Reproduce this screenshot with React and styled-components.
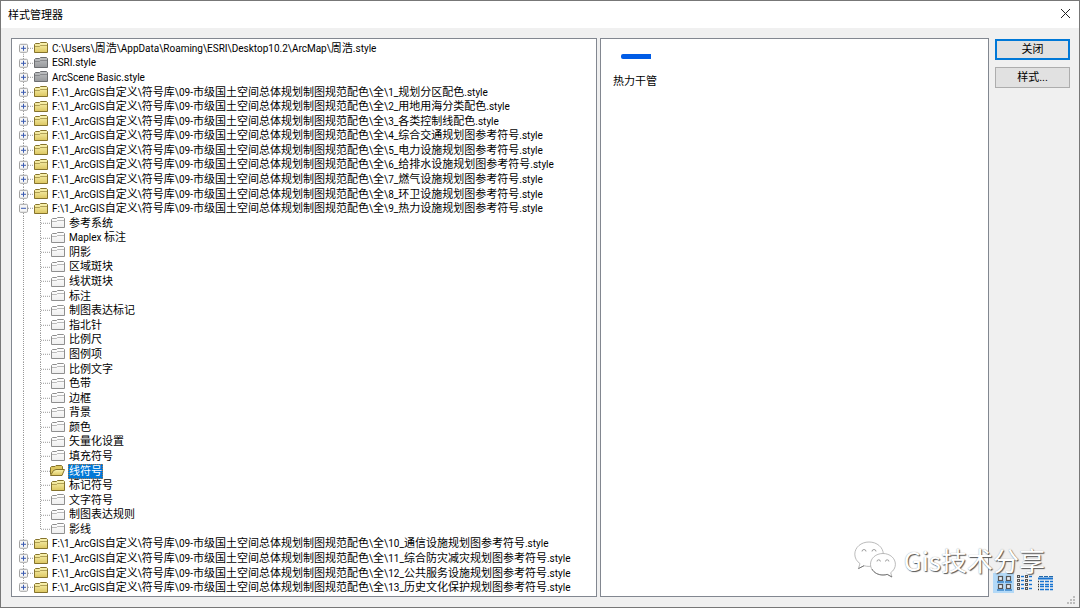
import React from "react";
import styled, { createGlobalStyle } from "styled-components";

const GlobalStyle = createGlobalStyle`
    * {
        box-sizing: border-box;
    }

    body {
        margin: 0;
        background: #f0f0f0;
        color: #000;
        font-family: Roboto, "Noto Sans CJK SC", sans-serif;
        font-size: 11px;
    }
`;

const Window = styled.div`
    position: relative;
    height: 100vh;
    min-height: 500px;
    display: flex;
    flex-direction: column;
    border: 1px solid #777;
    background: #f0f0f0;
`;

const TitleBar = styled.header`
    height: 27px;
    flex: none;
    display: flex;
    align-items: center;
    justify-content: space-between;
    padding: 0 8px 2px 7px;
    background: #fff;

    h1 {
        margin: 0;
        font-size: 11px;
        font-weight: 400;
    }
`;

const CloseButton = styled.button`
    display: flex;
    padding: 0;
    border: 0;
    background: none;
`;

const Content = styled.main`
    flex: 1;
    min-height: 0;
    display: grid;
    grid-template-columns: 586fr 3px 389fr 6px 75px;
    grid-template-rows: 100%;
    padding: 10px 9px 10px 10px;
`;

const Panel = styled.section`
    min-width: 0;
    border: 1px solid #828790;
    background: #fff;
`;

const TreePanel = styled(Panel)`
    padding: 2px 0 1px;
`;

const PreviewPanel = styled(Panel)`
    grid-column: 3;
    padding: 15px 12px;
`;

const Tree = styled.ul`
    height: 100%;
    margin: 0;
    padding: 0 0 0 7px;
    display: grid;
    grid-auto-rows: 1fr;
    list-style: none;
`;

const Row = styled.li`
    min-height: 0;
    display: flex;
    align-items: center;
    white-space: nowrap;
`;

const Lines = styled.svg`
    flex: none;
    align-self: stretch;
    width: ${({ $wide }) => ($wide ? "31px" : "14px")};
    height: 100%;
    overflow: hidden;
`;

const Folder = styled.svg`
    flex: none;
    width: 16px;
    height: 14px;
`;

const Label = styled.span`
    margin-left: 2px;
    padding: 1px 1px 0;
    line-height: 14px;
    ${({ $selected }) => $selected && `
        background: #0078d7;
        color: #fff;
        outline: 1px dotted #a8794a;
        outline-offset: -1px;
    `}
`;

const Latin = styled.span`
    font-size: 10px;
`;

const Swatch = styled.figure`
    width: 46px;
    margin: 0;

    figcaption {
        margin-top: 14px;
        line-height: 18px;
    }
`;

const LineSample = styled.div`
    width: 30px;
    height: 5px;
    margin-left: 8px;
    border-radius: 2px 0 0 2px;
    background: #005ce6;
`;

const Side = styled.aside`
    grid-column: 5;
    padding-top: 1px;
    display: flex;
    flex-direction: column;
    gap: 7px;
`;

const Button = styled.button`
    height: 21px;
    padding: 1px 0 0;
    border: ${({ $primary }) => ($primary ? "2px solid #0078d7" : "1px solid #adadad")};
    background: #e1e1e1;
    color: #000;
    font: inherit;
    line-height: 16px;
`;

const Views = styled.div`
    display: flex;
    margin: auto 0 4px -2px;
`;

const ViewButton = styled.button`
    display: flex;
    width: 21px;
    height: 20px;
    padding: 2px;
    border: 0;
    background: ${({ $active }) => ($active ? "#b3d9f7" : "none")};
`;

const Grip = styled.svg`
    position: absolute;
    right: 4px;
    bottom: 3px;
    width: 8px;
    height: 8px;
`;

const Watermark = styled.div`
    position: absolute;
    right: 34px;
    bottom: 28px;
    display: flex;
    align-items: center;
    gap: 8px;
    pointer-events: none;
    color: #fff;
    font-family: "Noto Sans CJK SC", sans-serif;
    font-size: 26px;
    line-height: 38px;
    text-shadow: 1px 1px 1px #555, 0 0 1px #999;
`;

const FOLDERS = {
    yellow: { top: "#fbf5b4", bottom: "#dcc660", line: "#85732c" },
    gray: { top: "#bfc1c3", bottom: "#97999c", line: "#6c6e71" },
    empty: { top: "#ffffff", bottom: "#eeeeee", line: "#8f8f8f" },
};

const BASE = "F:\\1_ArcGIS自定义\\符号库\\09-市级国土空间总体规划制图规范配色\\全\\";

const before = [
    { label: "C:\\Users\\周浩\\AppData\\Roaming\\ESRI\\Desktop10.2\\ArcMap\\周浩.style" },
    { label: "ESRI.style", kind: "gray" },
    { label: "ArcScene Basic.style", kind: "gray" },
    { label: BASE + "1_规划分区配色.style" },
    { label: BASE + "2_用地用海分类配色.style" },
    { label: BASE + "3_各类控制线配色.style" },
    { label: BASE + "4_综合交通规划图参考符号.style" },
    { label: BASE + "5_电力设施规划图参考符号.style" },
    { label: BASE + "6_给排水设施规划图参考符号.style" },
    { label: BASE + "7_燃气设施规划图参考符号.style" },
    { label: BASE + "8_环卫设施规划图参考符号.style" },
    { label: BASE + "9_热力设施规划图参考符号.style", expanded: true },
];

const categories = [
    "参考系统", "Maplex 标注", "阴影", "区域斑块", "线状斑块", "标注", "制图表达标记",
    "指北针", "比例尺", "图例项", "比例文字", "色带", "边框", "背景", "颜色",
    "矢量化设置", "填充符号", "线符号", "标记符号", "文字符号", "制图表达规则", "影线",
];

const after = [
    { label: BASE + "10_通信设施规划图参考符号.style" },
    { label: BASE + "11_综合防灾减灾规划图参考符号.style" },
    { label: BASE + "12_公共服务设施规划图参考符号.style" },
    { label: BASE + "13_历史文化保护规划图参考符号.style" },
];

// Latin runs are set one size smaller than the Chinese text
const Mixed = ({ text }) =>
    text.split(/([\x20-\x7e]+)/).map((part, i) => (i % 2 ? <Latin key={i}>{part}</Latin> : part));

const Dots = (props) => <line stroke="#999" strokeDasharray="1 1" {...props} />;

const FolderIcon = ({ kind, open }) => {
    const { top, bottom, line } = FOLDERS[kind];
    const id = "folder-" + kind;
    return (
        <Folder viewBox="0 0 16 14" aria-hidden="true">
            <defs>
                <linearGradient id={id} x1="0" y1="0" x2="0" y2="1">
                    <stop offset="0" stopColor={top} />
                    <stop offset="1" stopColor={bottom} />
                </linearGradient>
            </defs>
            {open ? (
                <>
                    <path d="M0.5 10.5V3.5L1.5 2.5H5L6 1.5H11.5L12.5 2.5V5" fill={bottom} stroke={line} />
                    <path d="M0.5 11.5L3.5 6.5L6 5.5H14.5L12 11.5Z" fill={`url(#${id})`} stroke={line} />
                </>
            ) : (
                <>
                    <path d="M1.5 11.5V3.5L2.5 2.5H6.5L7.5 1.5H13.5L14.5 2.5V11.5Z" fill={`url(#${id})`} stroke={line} />
                    <path d="M2 5.5H6.5L7.5 4.5H14" fill="none" stroke={line} strokeOpacity="0.6" />
                </>
            )}
        </Folder>
    );
};

const RootRow = ({ label, kind = "yellow", expanded = false, first, last }) => (
    <Row role="treeitem" aria-level={1} aria-expanded={expanded}>
        <Lines aria-hidden="true">
            <Dots x1="4.5" x2="4.5" y1={first ? "50%" : "0"} y2={last ? "50%" : "100%"} />
            <Dots x1="9" x2="14" y1="50%" y2="50%" />
            <svg y="50%" overflow="visible">
                <rect x="0.5" y="-4" width="8" height="8" rx="1" fill="#f6f6f6" stroke="#a3a3a3" />
                <path d={expanded ? "M2 0H7" : "M2 0H7M4.5 -2.5V2.5"} stroke="#3a5ab0" />
            </svg>
        </Lines>
        <FolderIcon kind={kind} />
        <Label><Mixed text={label} /></Label>
    </Row>
);

const ChildRow = ({ label, last }) => {
    const selected = label === "线符号";
    const kind = selected || label === "标记符号" ? "yellow" : "empty";
    return (
        <Row role="treeitem" aria-level={2} aria-selected={selected}>
            <Lines $wide aria-hidden="true">
                <Dots x1="4.5" x2="4.5" y1="0" y2="100%" />
                <Dots x1="21.5" x2="21.5" y1="0" y2={last ? "50%" : "100%"} />
                <Dots x1="22" x2="31" y1="50%" y2="50%" />
            </Lines>
            <FolderIcon kind={kind} open={selected} />
            <Label $selected={selected}><Mixed text={label} /></Label>
        </Row>
    );
};

const LargeIconsView = () => (
    <svg width="17" height="16" viewBox="0 0 17 16" aria-hidden="true">
        {[[3, 1], [11, 1], [3, 9], [11, 9]].map(([x, y]) => (
            <g key={x + "-" + y}>
                <rect x={x + 0.5} y={y + 0.5} width="4" height="4" fill="#e8eef5" stroke="#555" strokeWidth="1.2" />
                <path d={`M${x - 1} ${y + 6}h7`} stroke="#2f7fc8" strokeWidth="1.4" />
            </g>
        ))}
    </svg>
);

const ListView = () => (
    <svg width="17" height="16" viewBox="0 0 17 16" aria-hidden="true">
        {[0, 8].map((x) => [1, 5, 9, 13].map((y) => (
            <g key={x + "-" + y}>
                <rect x={x + 1.5} y={y - 0.5} width="2" height="2" fill="#ddd" stroke="#555" />
                <path d={`M${x + 5} ${y + 0.5}h3`} stroke="#1673d1" strokeWidth="1.4" />
            </g>
        )))}
    </svg>
);

const DetailsView = () => (
    <svg width="17" height="16" viewBox="0 0 17 16" aria-hidden="true">
        <path d="M2 1.5H16" stroke="#2468a8" strokeDasharray="4 1" />
        <path d="M1 3.5H16" stroke="#1673d1" strokeWidth="2" />
        {[6, 9, 11, 14].map((y) => (
            <g key={y}>
                <path d={`M1 ${y + 0.5}h1`} stroke="#333" strokeWidth="1.4" />
                <path d={`M3 ${y + 0.5}h13`} stroke="#1673d1" strokeWidth="1.4" strokeDasharray="4 1" />
            </g>
        ))}
    </svg>
);

const ChatLogo = () => (
    <svg width="42" height="38" viewBox="0 0 42 38" fill="#fff" stroke="#aaa" strokeWidth="0.8" aria-hidden="true">
        <path d="M15 1C7 1 .8 6.4.8 13.2c0 3.9 2 7.2 5.2 9.4L4.4 27.6l5.6-2.9c1.7.5 3.3.7 5 .7 8 0 14.3-5.4 14.3-12.200S23 1 15 1Z" />
        <path d="M29 12.500C21.800 12.500 16.500 17.300 16.500 23.300S21.800 34 29 34c1.500 0 2.900-.2 4.200-.6L38 36l-1.300-4.300c2.900-2 4.700-5 4.700-8.400 0-6-5.400-10.800-12.400-10.800Z" />
        <path d="M8 10.500a2 2 0 0 1 4 0M18 10.500a2 2 0 0 1 4 0M23 20.500a1.700 1.700 0 0 1 3.400 0M31.500 20.500a1.700 1.700 0 0 1 3.400 0" fill="none" stroke="#888" />
        <path d="M4.400 27.600l5.600-2.900M18 28c2 3.700 6 6 11 6 1.500 0 2.900-.2 4.200-.6L38 36" fill="none" stroke="#666" />
    </svg>
);

export default function App() {
    return (
        <>
            <GlobalStyle />
            <Window>
                <TitleBar>
                    <h1>样式管理器</h1>
                    <CloseButton aria-label="关闭窗口">
                        <svg width="11" height="11" viewBox="0 0 11 11" aria-hidden="true">
                            <path d="M1 1L10 10M10 1L1 10" stroke="#222" />
                        </svg>
                    </CloseButton>
                </TitleBar>
                <Content>
                    <TreePanel>
                        <Tree role="tree" aria-label="样式">
                            {before.map((item, i) => <RootRow key={item.label} {...item} first={i === 0} />)}
                            {categories.map((label, i) => (
                                <ChildRow key={label} label={label} last={i === categories.length - 1} />
                            ))}
                            {after.map((item, i) => <RootRow key={item.label} {...item} last={i === after.length - 1} />)}
                        </Tree>
                    </TreePanel>
                    <PreviewPanel>
                        <Swatch>
                            <LineSample />
                            <figcaption>热力干管</figcaption>
                        </Swatch>
                    </PreviewPanel>
                    <Side>
                        <Button $primary>关闭</Button>
                        <Button>样式...</Button>
                        <Views>
                            <ViewButton $active aria-label="大图标"><LargeIconsView /></ViewButton>
                            <ViewButton aria-label="列表"><ListView /></ViewButton>
                            <ViewButton aria-label="详细信息"><DetailsView /></ViewButton>
                        </Views>
                    </Side>
                </Content>
                <Grip viewBox="0 0 8 8" fill="#bdbdbd" aria-hidden="true">
                    <path d="M6 0h2v2h-2zM3 3h2v2h-2zM6 3h2v2h-2zM0 6h2v2h-2zM3 6h2v2h-2zM6 6h2v2h-2z" />
                </Grip>
                <Watermark>
                    <ChatLogo />
                    <span>Gis技术分享</span>
                </Watermark>
            </Window>
        </>
    );
}
